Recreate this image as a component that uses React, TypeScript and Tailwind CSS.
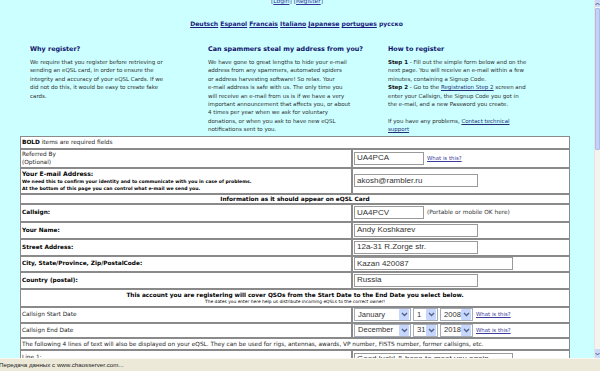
import React from "react";

const V = "font-['DejaVu_Sans',Verdana,sans-serif]";
const A = "font-['Liberation_Sans',Arial,sans-serif]";

function Chevron() {
  return (
    <svg width="7" height="5" viewBox="0 0 7 5">
      <path d="M1 1 L3.5 3.5 L6 1" fill="none" stroke="#4d6185" strokeWidth="1.3" />
    </svg>
  );
}

function Input({ value, w }: { value: string; w: string }) {
  return (
    <div className={`${w} h-[13px] border border-[#9a9a9a] bg-white flex items-center pl-[2px] ${A} text-[8px] text-[#333] whitespace-nowrap overflow-hidden`}>
      {value}
    </div>
  );
}

function Select({ value, w }: { value: string; w: string }) {
  return (
    <div className={`${w} h-[13px] border border-[#a5acb5] bg-white flex items-center ${A} text-[7.6px] text-[#333]`}>
      <span className="flex-1 min-w-0 pl-[3px] whitespace-nowrap overflow-hidden">{value}</span>
      <span className="w-[10px] shrink-0 h-[11px] mr-[1px] bg-[#c6d6fc] rounded-[1px] flex items-center justify-center">
        <Chevron />
      </span>
    </div>
  );
}

function What() {
  return <span className={`${V} text-[5.4px] text-[#3b3b9c] underline whitespace-nowrap`}>What is this?</span>;
}

const td = "border border-[#8a8a8a] p-0 align-middle";

export default function App() {
  return (
    <div className="w-[600px] h-[371px] flex flex-col overflow-hidden bg-[#ccffff]">
      <div className="flex flex-1 min-h-0">
        <div className="flex-1 min-w-0 overflow-hidden flex flex-col">
          <div className={`-mt-[3px] h-[8px] leading-[8px] text-center ${V} text-[6px] text-[#333399]`}>
            [<span className="underline">Login</span>] [<span className="underline">Register</span>]
          </div>
          <div className={`mt-[15px] h-[8px] leading-[8px] text-center ${V} font-bold text-[6.1px] text-[#1a1a80] whitespace-nowrap pr-[1px]`}>
            <span className="underline">Deutsch</span> <span className="underline">Espanol</span>{" "}
            <span className="underline">Francais</span> <span className="underline">Italiano</span>{" "}
            <span className="underline">Japanese</span> <span className="underline">portugues</span> русско
          </div>

          <div className={`mt-[17px] flex ${V} text-[5.5px] leading-[8.4px] text-[#2e2e2e] whitespace-nowrap`}>
            <div className="ml-[30px] w-[178px] flex flex-col">
              <div className="h-[8px] leading-[8px] font-bold text-[6.4px] text-[#10106a]">Why register?</div>
              <div className="mt-[5px]">
                We require that you register before retrieving or<br />
                sending an eQSL card, in order to ensure the<br />
                integrity and accuracy of your eQSL Cards. If we<br />
                did not do this, it would be easy to create fake<br />
                cards.
              </div>
            </div>
            <div className="w-[180px] flex flex-col">
              <div className="h-[8px] leading-[8px] font-bold text-[6.4px] text-[#10106a]">Can spammers steal my address from you?</div>
              <div className="mt-[5px]">
                We have gone to great lengths to hide your e-mail<br />
                address from any spammers, automated spiders<br />
                or address harvesting software! So relax. Your<br />
                e-mail address is safe with us. The only time you<br />
                will receive an e-mail from us is if we have a very<br />
                important announcement that affects you, or about<br />
                4 times per year when we ask for voluntary<br />
                donations, or when you ask to have new eQSL<br />
                notifications sent to you.
              </div>
            </div>
            <div className="flex-1 flex flex-col">
              <div className="h-[8px] leading-[8px] font-bold text-[6.4px] text-[#10106a]">How to register</div>
              <div className="mt-[5px]">
                <b className="text-[#111]">Step 1</b> - Fill out the simple form below and on the<br />
                next page. You will receive an e-mail within a few<br />
                minutes, containing a Signup Code.<br />
                <b className="text-[#111]">Step 2</b> - Go to the <span className="underline text-[#22307a]">Registration Step 2</span> screen and<br />
                enter your Callsign, the Signup Code you got in<br />
                the e-mail, and a new Password you create.<br />
                <br />
                If you have any problems, <span className="underline text-[#22307a]">Contact technical</span><br />
                <span className="underline text-[#22307a]">support</span>
              </div>
            </div>
          </div>

          <table className={`mt-[2px] ml-[20px] w-[550px] border-separate border-spacing-0 bg-white ${V} text-[5.8px] text-[#1e1e1e] table-fixed`}>
            <colgroup>
              <col className="w-[332px]" />
              <col />
            </colgroup>
            <tbody>
              <tr>
                <td colSpan={2} className={`${td} h-[13px] px-[1px] leading-[8px]`}>
                  <b className="text-black">BOLD</b> items are required fields
                </td>
              </tr>
              <tr>
                <td className={`${td} h-[19px] px-[1px] leading-[8.5px]`}>
                  Referred By<br />(Optional)
                </td>
                <td className={`${td} pl-[1px]`}>
                  <div className="flex items-center gap-[3px]">
                    <Input value="UA4PCA" w="w-[70px]" />
                    <What />
                  </div>
                </td>
              </tr>
              <tr>
                <td className={`${td} h-[26px] px-[1px] leading-[7.5px] text-black`}>
                  <div className="font-bold text-[6.1px] leading-[9px]">Your E-mail Address:</div>
                  <div className="font-bold text-[4.6px] leading-[7px] whitespace-nowrap">
                    We need this to confirm your identity and to communicate with you in case of problems.<br />
                    At the bottom of this page you can control what e-mail we send you.
                  </div>
                </td>
                <td className={`${td} pl-[1px]`}>
                  <Input value="akosh@rambler.ru" w="w-[124px]" />
                </td>
              </tr>
              <tr>
                <td colSpan={2} className={`${td} h-[10px] text-center font-bold text-black leading-[8px]`}>
                  Information as it should appear on eQSL Card
                </td>
              </tr>
              <tr>
                <td className={`${td} h-[18px] px-[1px] font-bold text-black`}>Callsign:</td>
                <td className={`${td} pl-[1px]`}>
                  <div className="flex items-center gap-[3px]">
                    <Input value="UA4PCV" w="w-[70px]" />
                    <span className="whitespace-nowrap text-[#333]">(Portable or mobile OK here)</span>
                  </div>
                </td>
              </tr>
              <tr>
                <td className={`${td} h-[17px] px-[1px] font-bold text-black`}>Your Name:</td>
                <td className={`${td} pl-[1px]`}>
                  <Input value="Andy Koshkarev" w="w-[124px]" />
                </td>
              </tr>
              <tr>
                <td className={`${td} h-[17px] px-[1px] font-bold text-black`}>Street Address:</td>
                <td className={`${td} pl-[1px]`}>
                  <Input value="12a-31 R.Zorge str." w="w-[124px]" />
                </td>
              </tr>
              <tr>
                <td className={`${td} h-[16px] px-[1px] font-bold text-black`}>City, State/Province, Zip/PostalCode:</td>
                <td className={`${td} pl-[1px]`}>
                  <Input value="Kazan 420087" w="w-[159px]" />
                </td>
              </tr>
              <tr>
                <td className={`${td} h-[17px] px-[1px] font-bold text-black`}>Country (postal):</td>
                <td className={`${td} pl-[1px]`}>
                  <Input value="Russia" w="w-[124px]" />
                </td>
              </tr>
              <tr>
                <td colSpan={2} className={`${td} h-[18px] text-center text-black`}>
                  <div className="font-bold leading-[8px] whitespace-nowrap">
                    This account you are registering will cover QSOs from the Start Date to the End Date you select below.
                  </div>
                  <div className="text-[4.4px] leading-[6px] whitespace-nowrap">
                    The dates you enter here help us distribute incoming eQSLs to the correct owner!
                  </div>
                </td>
              </tr>
              <tr>
                <td className={`${td} h-[16px] px-[1px]`}>Callsign Start Date</td>
                <td className={`${td} pl-[1px]`}>
                  <div className="flex items-center gap-[2px]">
                    <Select value="January" w="w-[57px]" />
                    <Select value="1" w="w-[25px]" />
                    <Select value="2008" w="w-[33px]" />
                    <span className="ml-[1px]"><What /></span>
                  </div>
                </td>
              </tr>
              <tr>
                <td className={`${td} h-[15px] px-[1px]`}>Callsign End Date</td>
                <td className={`${td} pl-[1px]`}>
                  <div className="flex items-center gap-[2px]">
                    <Select value="December" w="w-[57px]" />
                    <Select value="31" w="w-[25px]" />
                    <Select value="2018" w="w-[33px]" />
                    <span className="ml-[1px]"><What /></span>
                  </div>
                </td>
              </tr>
              <tr>
                <td colSpan={2} className={`${td} h-[12px] px-[1px] whitespace-nowrap leading-[8px]`}>
                  The following 4 lines of text will also be displayed on your eQSL. They can be used for rigs, antennas, awards, VP number, FISTS number, former callsigns, etc.
                </td>
              </tr>
              <tr>
                <td className={`${td} h-[18px] px-[1px] align-top pt-[2px]`}>Line 1:</td>
                <td className={`${td} pl-[1px] align-top pt-[2px]`}>
                  <Input value="Good luck! & hope to meet you again" w="w-[159px]" />
                </td>
              </tr>
            </tbody>
          </table>
        </div>
        <div className="w-[6px] flex flex-col bg-[#f4f3ee] border-l border-[#e6e4dc]">
          <div className="h-[7px] bg-[#c9d8fb] flex items-center justify-center">
            <svg width="5" height="4" viewBox="0 0 5 4"><path d="M0.5 3 L2.5 1 L4.5 3" fill="none" stroke="#4d6185" strokeWidth="1" /></svg>
          </div>
          <div className="mt-[1px] h-[142px] bg-[#c3d2f8] border border-[#a9bde8] rounded-[1px]" />
          <div className="flex-1" />
          <div className="h-[9px] bg-[#c9d8fb] flex items-center justify-center">
            <svg width="5" height="4" viewBox="0 0 5 4"><path d="M0.5 1 L2.5 3 L4.5 1" fill="none" stroke="#4d6185" strokeWidth="1" /></svg>
          </div>
        </div>
      </div>
      <div className={`h-[13px] shrink-0 bg-[#ece9d8] border-t border-[#f8f7f2] flex items-center ${A} text-[6.2px] text-[#222] whitespace-nowrap`}>
        <span className="-ml-[1px]">Передача данных с www.chaosserver.com...</span>
      </div>
    </div>
  );
}
